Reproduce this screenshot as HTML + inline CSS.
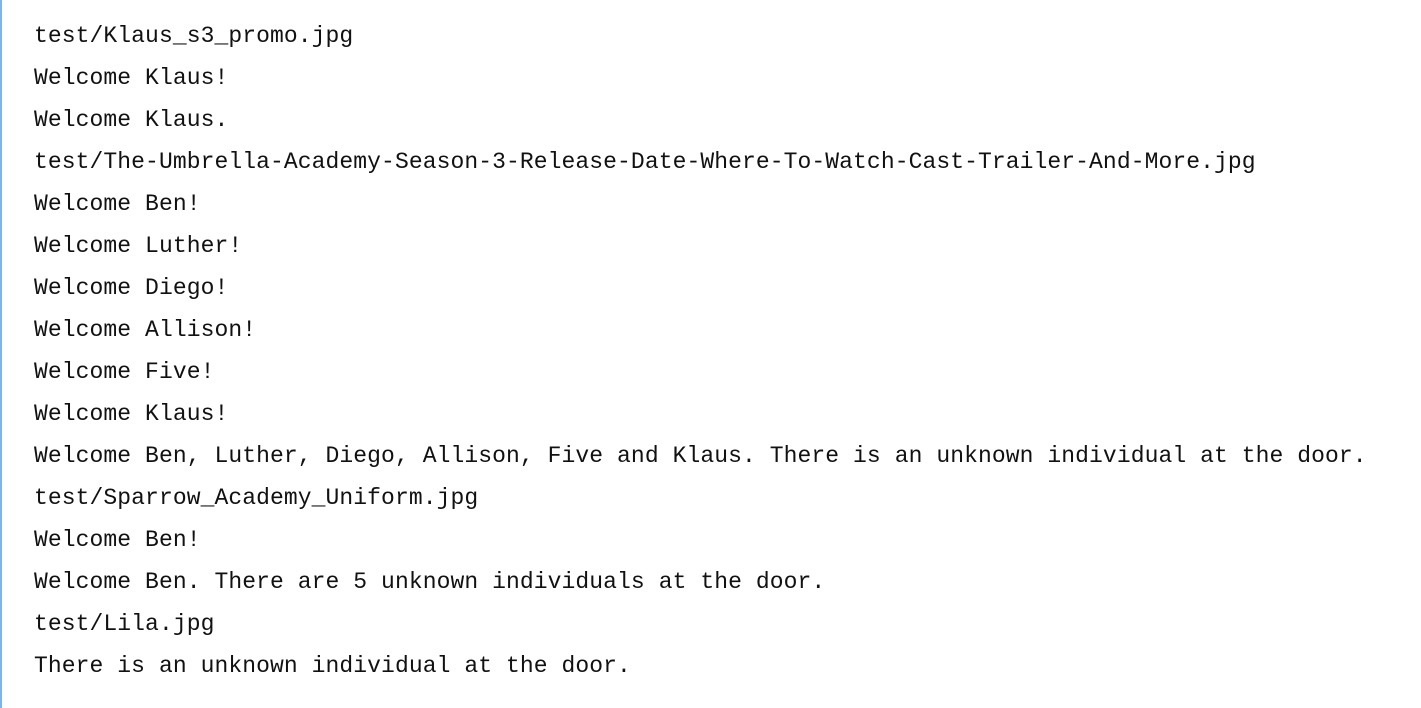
<!DOCTYPE html>
<html><head><meta charset="utf-8"><style>
html,body{margin:0;padding:0;background:#fff;width:1421px;height:708px;overflow:hidden}
.bar{position:absolute;left:0;top:0;width:2px;height:708px;background:#7fb3e8}
.out{position:absolute;left:34px;top:15px;font-family:"Liberation Mono",monospace;font-size:23px;letter-spacing:0.08px;line-height:42px;color:#111;white-space:pre}
</style></head><body>
<div class="bar"></div>
<div class="out">test/Klaus_s3_promo.jpg
Welcome Klaus!
Welcome Klaus.
test/The-Umbrella-Academy-Season-3-Release-Date-Where-To-Watch-Cast-Trailer-And-More.jpg
Welcome Ben!
Welcome Luther!
Welcome Diego!
Welcome Allison!
Welcome Five!
Welcome Klaus!
Welcome Ben, Luther, Diego, Allison, Five and Klaus. There is an unknown individual at the door.
test/Sparrow_Academy_Uniform.jpg
Welcome Ben!
Welcome Ben. There are 5 unknown individuals at the door.
test/Lila.jpg
There is an unknown individual at the door.</div>
</body></html>
